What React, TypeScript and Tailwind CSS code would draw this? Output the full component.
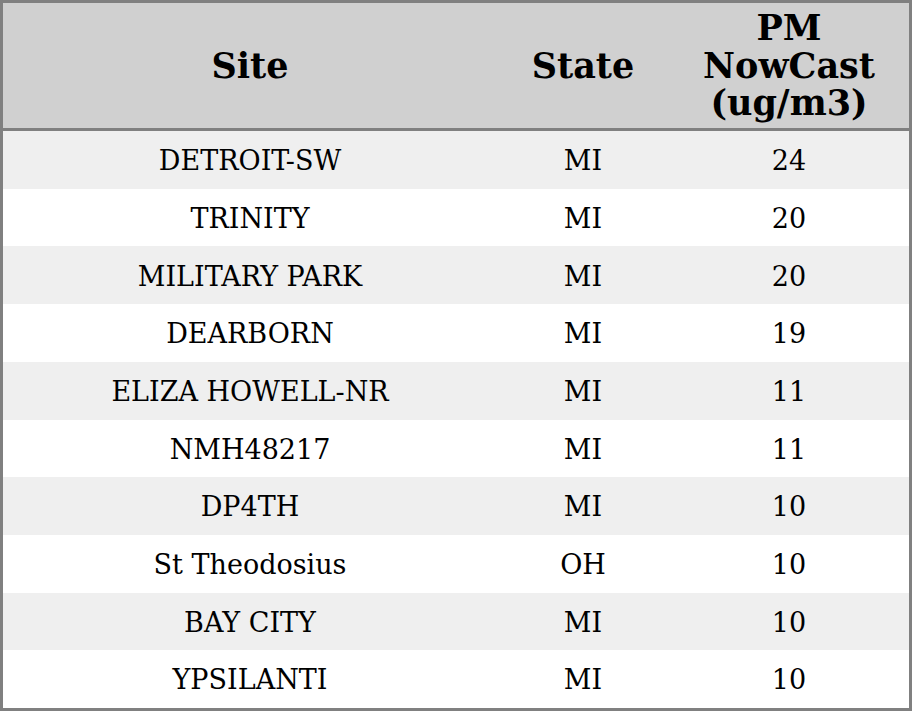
const rows: [string, string, number][] = [
  ["DETROIT-SW", "MI", 24],
  ["TRINITY", "MI", 20],
  ["MILITARY PARK", "MI", 20],
  ["DEARBORN", "MI", 19],
  ["ELIZA HOWELL-NR", "MI", 11],
  ["NMH48217", "MI", 11],
  ["DP4TH", "MI", 10],
  ["St Theodosius", "OH", 10],
  ["BAY CITY", "MI", 10],
  ["YPSILANTI", "MI", 10],
];

export default function App() {
  return (
    <div
      className="w-[912px] h-[711px] border-[3px] border-[#808080] bg-white flex flex-col text-black"
      style={{ fontFamily: '"DejaVu Serif", serif' }}
    >
      {/* header */}
      <div className="h-[128px] shrink-0 flex bg-[#d0d0d0] border-b-[3px] border-[#808080] text-[35px] font-bold leading-[37.5px]">
        <div className="w-[494px] flex items-center justify-center text-center">Site</div>
        <div className="w-[172px] flex items-center justify-center text-center">State</div>
        <div className="flex-1 flex items-center justify-center text-center">
          PM
          <br />
          NowCast
          <br />
          (ug/m3)
        </div>
      </div>

      {/* body */}
      <div className="flex-1 flex flex-col text-[27px]">
        {rows.map(([site, state, val], i) => (
          <div
            key={site}
            className={`flex-1 flex items-center pt-[3px] ${i % 2 === 0 ? "bg-[#efefef]" : "bg-white"}`}
          >
            <div className="w-[494px] text-center">{site}</div>
            <div className="w-[172px] text-center">{state}</div>
            <div className="flex-1 text-center">{val}</div>
          </div>
        ))}
      </div>
    </div>
  );
}
